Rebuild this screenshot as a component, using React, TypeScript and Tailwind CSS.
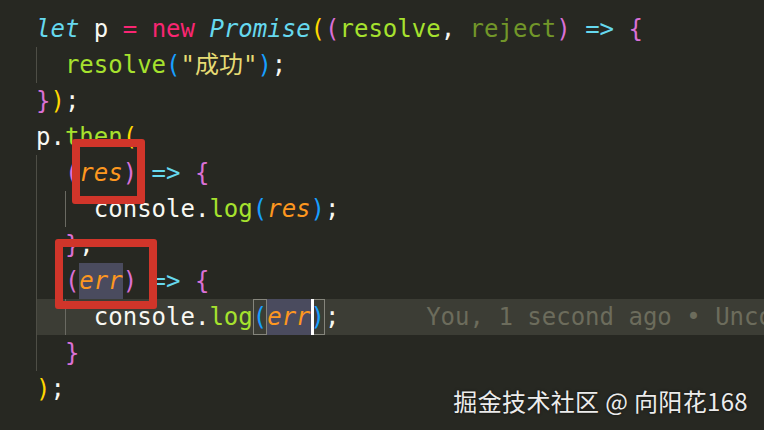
import React from 'react';

type Tok = { t: string; c?: string; sel?: boolean; box?: boolean; cursor?: boolean };

// Monokai-ish palette
const W = 'text-[#f8f8f2]';
const CY = 'text-[#66d9ef] italic';
const PK = 'text-[#f92672]';
const GR = 'text-[#a6e22e]';
const GRF = 'text-[#a6e22e]/60';
const OR = 'text-[#fd971f] italic';
const ST = 'text-[#e6db74]';
const BY = 'text-[#ffd700]';
const BP = 'text-[#da70d6]';
const BB = 'text-[#179fff]';

type Line = { indent: number; toks: Tok[]; current?: boolean; ghost?: string };

const lines: Line[] = [
  {
    indent: 0,
    toks: [
      { t: 'let', c: CY },
      { t: ' p ', c: W },
      { t: '=', c: PK },
      { t: ' ', c: W },
      { t: 'new', c: PK },
      { t: ' ', c: W },
      { t: 'Promise', c: CY },
      { t: '(', c: BY },
      { t: '(', c: BP },
      { t: 'resolve', c: GR },
      { t: ', ', c: W },
      { t: 'reject', c: GRF },
      { t: ')', c: BP },
      { t: ' ', c: W },
      { t: '=>', c: 'text-[#66d9ef]' },
      { t: ' ', c: W },
      { t: '{', c: BP },
    ],
  },
  {
    indent: 1,
    toks: [
      { t: 'resolve', c: GR },
      { t: '(', c: BB },
      { t: '"成功"', c: ST },
      { t: ')', c: BB },
      { t: ';', c: W },
    ],
  },
  { indent: 0, toks: [{ t: '}', c: BP }, { t: ')', c: BY }, { t: ';', c: W }] },
  { indent: 0, toks: [{ t: 'p.', c: W }, { t: 'then', c: GR }, { t: '(', c: BY }] },
  {
    indent: 1,
    toks: [
      { t: '(', c: BP },
      { t: 'res', c: OR },
      { t: ')', c: BP },
      { t: ' ', c: W },
      { t: '=>', c: 'text-[#66d9ef]' },
      { t: ' ', c: W },
      { t: '{', c: BP },
    ],
  },
  {
    indent: 2,
    toks: [
      { t: 'console.', c: W },
      { t: 'log', c: GR },
      { t: '(', c: BB },
      { t: 'res', c: OR },
      { t: ')', c: BB },
      { t: ';', c: W },
    ],
  },
  { indent: 1, toks: [{ t: '}', c: BP }, { t: ',', c: W }] },
  {
    indent: 1,
    toks: [
      { t: '(', c: BP },
      { t: 'err', c: OR, sel: true },
      { t: ')', c: BP },
      { t: ' ', c: W },
      { t: '=>', c: 'text-[#66d9ef]' },
      { t: ' ', c: W },
      { t: '{', c: BP },
    ],
  },
  {
    indent: 2,
    current: true,
    ghost: 'You, 1 second ago • Uncommitted changes',
    toks: [
      { t: 'console.', c: W },
      { t: 'log', c: GR },
      { t: '(', c: BB, box: true },
      { t: 'err', c: OR, sel: true },
      { t: ')', c: BB, box: true, cursor: true },
      { t: ';', c: W },
    ],
  },
  { indent: 1, toks: [{ t: '}', c: BP }] },
  { indent: 0, toks: [{ t: ')', c: BY }, { t: ';', c: W }] },
];

const App: React.FC = () => {
  return (
    <div className="relative flex w-[764px] h-[430px] overflow-hidden bg-[#272822]">
      {/* git gutter strip */}
      <div className="w-[2px] mt-[10px] bg-[#4b5d1f]" />

      <div
        className="flex-1 pl-[36px] pt-[11px] text-[24px]"
        style={{ fontFamily: '"DejaVu Sans Mono", "Noto Sans CJK SC", monospace' }}
      >
        {lines.map((line, i) => (
          <div
            key={i}
            className={`flex h-9 leading-9 whitespace-pre ${line.current ? 'bg-[#3c3d35]' : ''}`}
          >
            {Array.from({ length: line.indent }).map((_, k) => (
              <span
                key={k}
                className={`w-[2ch] shrink-0 border-l ${
                  k === 1 ? 'border-[#6a6a62]' : 'border-[#4e4e46]'
                }`}
              />
            ))}
            {line.toks.map((tok, j) => (
              <span
                key={j}
                className={`relative ${tok.c ?? W} ${tok.sel ? 'bg-[#4a4b5e]' : ''} ${
                  tok.box ? 'outline outline-1 -outline-offset-1 outline-[#85857c]' : ''
                }`}
              >
                {tok.t}
                {tok.cursor && (
                  <span className="absolute left-0 top-0 h-full w-[3px] bg-white" />
                )}
              </span>
            ))}
            {line.ghost && (
              <span className="pl-[6ch] text-[#6c6c5c]">{line.ghost}</span>
            )}
          </div>
        ))}
      </div>

      {/* red annotation boxes */}
      <div className="absolute left-[72px] top-[139px] w-[73px] h-[65px] border-[8px] border-[#d1352a] rounded-[3px]" />
      <div className="absolute left-[55px] top-[239px] w-[102px] h-[70px] border-[8px] border-[#d1352a] rounded-[3px]" />

      {/* watermark */}
      <div
        className="absolute right-[16px] top-[383px] text-[24px] tracking-[0.35px] text-[#ececec] [text-shadow:0_0_3px_rgba(0,0,0,0.6)]"
        style={{ fontFamily: '"Noto Sans CJK SC", "Noto Sans", sans-serif' }}
      >
        掘金技术社区 @ 向阳花168
      </div>
    </div>
  );
};

export default App;
